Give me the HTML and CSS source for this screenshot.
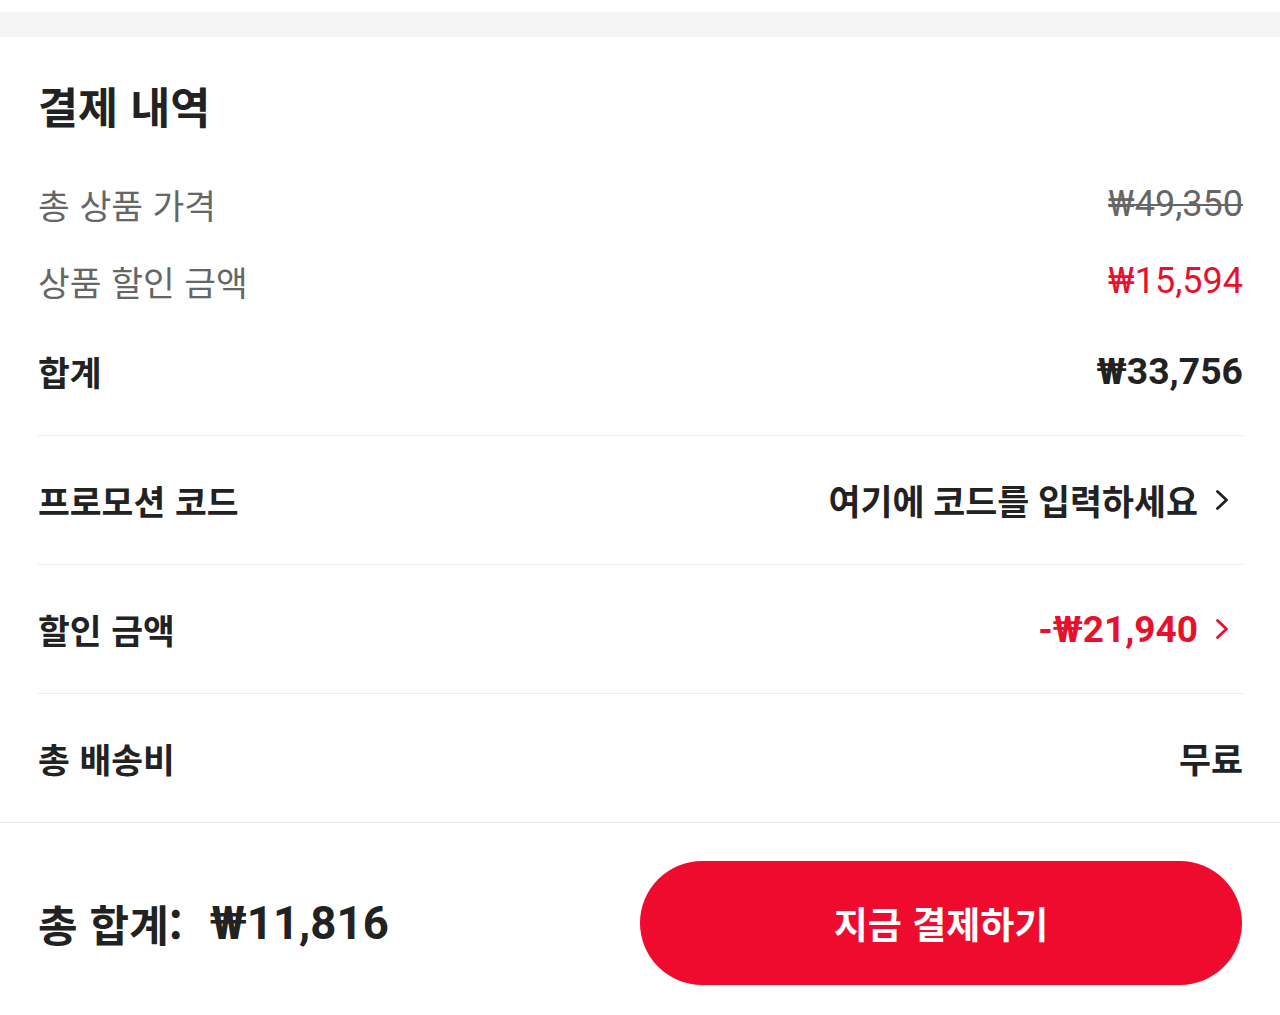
FILE: index.html
```html
<!DOCTYPE html>
<html lang="ko">
<head>
<meta charset="utf-8">
<title>결제 내역</title>
<link rel="stylesheet" href="styles.css">
</head>
<body>
<div class="page">
  <div class="topband"></div>
  <section class="summary">
    <h1 class="title">결제 내역</h1>
    <div class="line">
      <span class="label-light">총 상품 가격</span>
      <span class="price-old">₩49,350</span>
    </div>
    <div class="line">
      <span class="label-light">상품 할인 금액</span>
      <span class="price-red">₩15,594</span>
    </div>
    <div class="line line-total">
      <span class="label-bold">합계</span>
      <span class="price-bold">₩33,756</span>
    </div>
  </section>
  <section class="list">
    <div class="row">
      <span class="label-bold">프로모션 코드</span>
      <span class="row-value">
        <span class="value-dark">여기에 코드를 입력하세요</span>
        <svg class="chev" viewBox="0 0 28 28" width="28" height="28"><path d="M2.5 5.5 L11.5 14 L2.5 22.5" fill="none" stroke="#222" stroke-width="2.8" stroke-linecap="round" stroke-linejoin="round"/></svg>
      </span>
    </div>
    <div class="row">
      <span class="label-bold">할인 금액</span>
      <span class="row-value">
        <span class="value-red">-₩21,940</span>
        <svg class="chev" viewBox="0 0 28 28" width="28" height="28"><path d="M2.5 5.5 L11.5 14 L2.5 22.5" fill="none" stroke="#e8112d" stroke-width="2.8" stroke-linecap="round" stroke-linejoin="round"/></svg>
      </span>
    </div>
    <div class="row">
      <span class="label-bold">총 배송비</span>
      <span class="value-dark">무료</span>
    </div>
  </section>
  <footer class="footer">
    <div class="grand">
      <span class="grand-label">총 합계:</span>
      <span class="grand-value">₩11,816</span>
    </div>
    <button class="pay">지금 결제하기</button>
  </footer>
</div>
</body>
</html>
```

FILE: styles.css
```css
* { box-sizing: border-box; }
html, body {
  margin: 0;
  padding: 0;
  background: #ffffff;
}
body {
  font-family: Roboto, "Noto Sans CJK KR", sans-serif;
  color: #222222;
}
.page {
  padding-top: 12px;
  width: 1280px;
}
.topband {
  height: 25px;
  background: #f5f5f5;
}
.summary {
  padding: 0 37px 26px 38px;
}
.title {
  margin: 39px 0 0 0;
  height: 60px;
  line-height: 60px;
  font-size: 43.5px;
  font-weight: 700;
  font-family: "Noto Sans CJK KR", sans-serif;
  color: #222;
}
.line {
  display: flex;
  justify-content: space-between;
  align-items: center;
  height: 77px;
}
.title + .line { margin-top: 29px; }
.line-total { margin-top: 13px; }
.label-light {
  font-family: "Noto Sans CJK KR", sans-serif;
  font-size: 34.5px;
  font-weight: 400;
  color: #666666;
}
.label-bold {
  font-family: "Noto Sans CJK KR", sans-serif;
  font-size: 34.6px;
  font-weight: 700;
  color: #222222;
}
.price-old {
  font-size: 36px;
  color: #666666;
  text-decoration: line-through;
  text-decoration-thickness: 2px;
}
.price-red {
  font-size: 36px;
  color: #e8112d;
}
.price-bold {
  font-size: 37.3px;
  font-weight: 700;
  color: #222222;
}
.list {
  padding: 0 37px 0 38px;
}
.row {
  display: flex;
  justify-content: space-between;
  align-items: center;
  height: 129px;
  border-top: 1px solid #ececec;
}
.row-value {
  display: flex;
  align-items: center;
}
.value-dark {
  font-family: Roboto, "Noto Sans CJK KR", sans-serif;
  font-size: 34.8px;
  font-weight: 700;
  color: #222222;
}
.value-red {
  font-size: 37px;
  font-weight: 700;
  color: #e8112d;
}
.chev {
  display: block;
  margin-left: 17px;
}
.footer {
  border-top: 1px solid #e6e6e6;
  display: flex;
  justify-content: space-between;
  align-items: center;
  padding: 38px 38px 30px 38px;
}
.grand {
  display: flex;
  align-items: center;
  gap: 27px;
  font-weight: 700;
  color: #222222;
}
.grand-label {
  font-family: "Noto Sans CJK KR", sans-serif;
  font-size: 43px;
}
.grand-value {
  font-size: 45.6px;
}
.pay {
  width: 602px;
  height: 124px;
  border: none;
  border-radius: 62px;
  background: #ef0b2d;
  color: #ffffff;
  font-family: "Noto Sans CJK KR", sans-serif;
  font-size: 37px;
  font-weight: 700;
  padding: 0;
  cursor: pointer;
}
```
